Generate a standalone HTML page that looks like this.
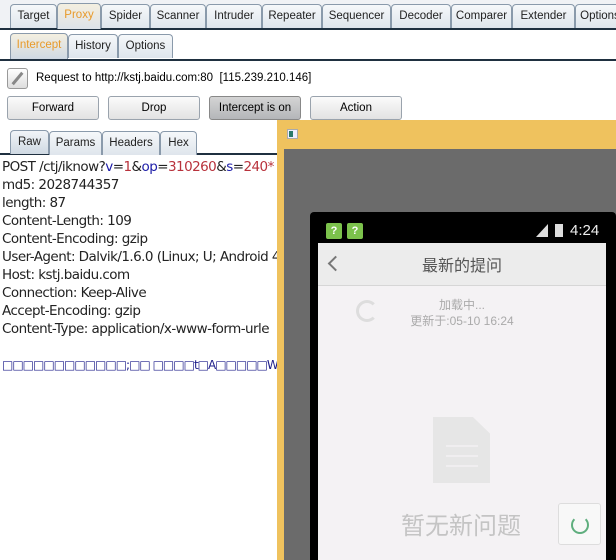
<!DOCTYPE html>
<html><head><meta charset="utf-8"><style>
*{margin:0;padding:0;box-sizing:border-box}
body{width:616px;height:560px;overflow:hidden;background:#fff;font-family:"Liberation Sans","Noto Sans CJK SC",sans-serif;position:relative;font-size:11px;color:#000}
.a{position:absolute}
.tab{position:absolute;height:24px;border:1px solid #8a9aab;border-bottom:none;border-radius:4px 4px 0 0;background:linear-gradient(#f6f8fa,#dfe5ec);text-align:center;line-height:22px;font-size:11.5px;color:#222}
.btn{position:absolute;top:96px;height:24px;border:1px solid #9aa3ad;border-radius:3px;background:linear-gradient(#fbfbfb,#e2e2e2);text-align:center;line-height:22px;font-size:11.5px}
.code{position:absolute;left:2px;font-size:13.5px;line-height:18px;white-space:nowrap;color:#222;font-family:"DejaVu Sans","Liberation Sans",sans-serif;letter-spacing:-0.55px}
</style></head><body>
<div class="a" style="left:0;top:0;width:616px;height:30px;background:#f0f2f5"></div>
<div class="a" style="left:0;top:28px;width:616px;height:2px;background:#1f3040"></div>
<div class="tab" style="left:10px;top:4px;width:47px">Target</div>
<div class="tab" style="left:57px;top:3px;width:44px;height:26px;background:linear-gradient(#f4efe0,#dde2e8);color:#e89a2a">Proxy</div>
<div class="tab" style="left:101px;top:4px;width:49px">Spider</div>
<div class="tab" style="left:150px;top:4px;width:56px">Scanner</div>
<div class="tab" style="left:206px;top:4px;width:56px">Intruder</div>
<div class="tab" style="left:262px;top:4px;width:60px">Repeater</div>
<div class="tab" style="left:322px;top:4px;width:69px">Sequencer</div>
<div class="tab" style="left:391px;top:4px;width:60px">Decoder</div>
<div class="tab" style="left:451px;top:4px;width:61px">Comparer</div>
<div class="tab" style="left:512px;top:4px;width:63px">Extender</div>
<div class="tab" style="left:575px;top:4px;width:50px">Options</div>

<div class="a" style="left:0;top:59px;width:616px;height:2px;background:#1f3040"></div>
<div class="tab" style="left:10px;top:33px;width:58px;height:26px;background:linear-gradient(#f4efe0,#cfd9e3);color:#e89a2a">Intercept</div>
<div class="tab" style="left:68px;top:34px;width:50px">History</div>
<div class="tab" style="left:118px;top:34px;width:55px">Options</div>

<div class="a" style="left:7px;top:68px;width:21px;height:21px;border:1px solid #999;border-radius:3px;background:linear-gradient(#fff,#ddd)"><div class="a" style="left:8px;top:2px;width:3px;height:15px;background:#888;transform:rotate(40deg)"></div></div>
<div class="a" style="left:36px;top:72px;font-size:11.5px">Request to http://kstj.baidu.com:80&nbsp; [115.239.210.146]</div>

<div class="btn" style="left:7px;width:92px">Forward</div>
<div class="btn" style="left:108px;width:92px">Drop</div>
<div class="btn" style="left:209px;width:92px;background:linear-gradient(#d4d4d4,#b4b6b9);border-color:#888">Intercept is on</div>
<div class="btn" style="left:310px;width:92px">Action</div>

<div class="a" style="left:0;top:153px;width:280px;height:2px;background:#1f3040"></div>
<div class="tab" style="left:10px;top:130px;width:39px;height:24px;background:linear-gradient(#f1f4f7,#cfd9e3)">Raw</div>
<div class="tab" style="left:49px;top:131px;width:53px">Params</div>
<div class="tab" style="left:102px;top:131px;width:58px">Headers</div>
<div class="tab" style="left:160px;top:131px;width:37px">Hex</div>

<div class="code" style="top:158px">POST /ctj/iknow?<span style="color:#1c1ca8">v</span>=<span style="color:#b8323c">1</span>&amp;<span style="color:#1c1ca8">op</span>=<span style="color:#b8323c">310260</span>&amp;<span style="color:#1c1ca8">s</span>=<span style="color:#b8323c">240*</span></div>
<div class="code" style="top:176px">md5: 2028744357<br>length: 87<br>Content-Length: 109<br>Content-Encoding: gzip<br>User-Agent: Dalvik/1.6.0 (Linux; U; Android 4<br>Host: kstj.baidu.com<br>Connection: Keep-Alive<br>Accept-Encoding: gzip<br>Content-Type: application/x-www-form-urle</div>
<div class="code" style="top:356px;color:#1c1c8a;font-size:12px;letter-spacing:-1px">□□□□□□□□□□□□;□□ □□□□t□A□□□□□W □□□</div>

<!-- emulator window -->
<div class="a" style="left:277px;top:120px;width:339px;height:440px;background:#efc25e"></div>
<div class="a" style="left:287px;top:129px;width:11px;height:10px;background:#eef;border:1px solid #aaa"><div class="a" style="left:1px;top:1px;width:4px;height:6px;background:#2a7a6a"></div></div>
<div class="a" style="left:284px;top:149px;width:332px;height:411px;background:#6b6b6b"></div>
<div class="a" style="left:310px;top:212px;width:306px;height:348px;background:#000;border-radius:4px 4px 0 0"></div>
<div class="a" style="left:326px;top:223px;width:16px;height:16px;background:#7cc24c;border-radius:2px;color:#fff;font-size:11px;text-align:center;line-height:16px;font-weight:bold">?</div>
<div class="a" style="left:347px;top:223px;width:16px;height:16px;background:#7cc24c;border-radius:2px;color:#fff;font-size:11px;text-align:center;line-height:16px;font-weight:bold">?</div>
<div class="a" style="left:536px;top:224px;width:0;height:0;border-left:12px solid transparent;border-bottom:13px solid #ddd"></div>
<div class="a" style="left:555px;top:224px;width:8px;height:13px;background:#ddd"></div>
<div class="a" style="left:570px;top:222px;color:#eee;font-size:15px">4:24</div>
<div class="a" style="left:318px;top:243px;width:288px;height:317px;background:#f4f2f4"></div>
<div class="a" style="left:318px;top:243px;width:288px;height:43px;background:#ececec;border-bottom:1px solid #d6d6d6"></div>
<div class="a" style="left:330px;top:258px;width:11px;height:11px;border-left:2px solid #777;border-bottom:2px solid #777;transform:rotate(45deg)"></div>
<div class="a" style="left:318px;top:252px;width:288px;text-align:center;font-size:16px;color:#555">最新的提问</div>
<div class="a" style="left:356px;top:300px;width:22px;height:22px;border:3px solid #ddd;border-right-color:transparent;border-radius:50%"></div>
<div class="a" style="left:318px;top:297px;width:288px;text-align:center;font-size:12px;color:#aaa;line-height:16px">加载中...<br>更新于:05-10 16:24</div>
<div class="a" style="left:433px;top:417px;width:57px;height:66px;background:#e6e6e6;clip-path:polygon(0 0,70% 0,100% 25%,100% 100%,0 100%)"><div class="a" style="left:13px;top:28px;width:32px;height:2px;background:#f0eef0;box-shadow:0 10px 0 #f0eef0,0 20px 0 #f0eef0"></div></div>
<div class="a" style="left:318px;top:506px;width:288px;text-align:center;font-size:24px;color:#c4c4c4;padding-right:2px">暂无新问题</div>
<div class="a" style="left:558px;top:503px;width:43px;height:42px;background:#f8f8f8;border:1px solid #ddd;border-radius:3px"><div class="a" style="left:12px;top:12px;width:18px;height:18px;border:2.5px solid #5fae7e;border-top-color:transparent;border-radius:50%"></div></div>
</body></html>
